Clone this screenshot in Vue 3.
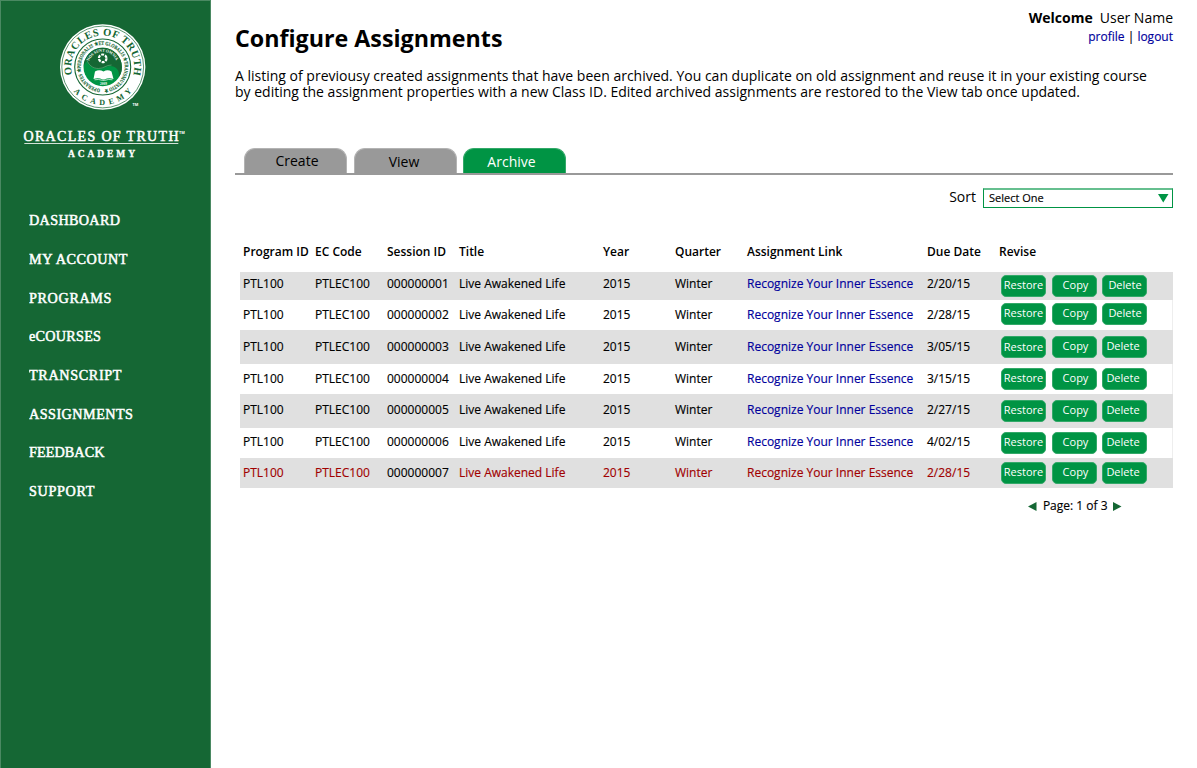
<script setup>
const nav = [
  { label: 'DASHBOARD', w: 91 },
  { label: 'MY ACCOUNT', w: 98.5 },
  { label: 'PROGRAMS', w: 82.5 },
  { label: 'eCOURSES', w: 72 },
  { label: 'TRANSCRIPT', w: 92.5 },
  { label: 'ASSIGNMENTS', w: 104 },
  { label: 'FEEDBACK', w: 75.5 },
  { label: 'SUPPORT', w: 65.5 }
]
const heads = ['Program ID', 'EC Code', 'Session ID', 'Title', 'Year', 'Quarter', 'Assignment Link', 'Due Date', 'Revise']
const rows = [
  { n: 1, due: '2/20/15' },
  { n: 2, due: '2/28/15' },
  { n: 3, due: '3/05/15' },
  { n: 4, due: '3/15/15' },
  { n: 5, due: '2/27/15' },
  { n: 6, due: '4/02/15' },
  { n: 7, due: '2/28/15', late: true }
]
</script>

<template>
  <div class="page">
    <aside class="side">
      <svg class="logo" width="211" height="170" viewBox="0 0 211 170">
        <defs>
          <path id="arcTop" d="M71.2 67a31.500 31.500 0 0 1 63 0a31.500 31.500 0 0 1 -63 0" transform="rotate(-90 102.7 67)" />
          <path id="arcBottom" d="M64.7 67a38 38 0 0 0 76 0" />
          <path id="arcInner" d="M102.7 89a22 22 0 0 1 0 -44a22 22 0 0 1 0 44" />
          <path id="arcMotto" d="M89.200 61a14.500 14.500 0 0 1 28 6" />
        </defs>
        <circle cx="102.7" cy="67" r="42.700" fill="#fff" />
        <circle cx="102.7" cy="67" r="40.9" fill="none" stroke="#156734" stroke-width=".7" />
        <circle cx="102.7" cy="67" r="28" fill="#fff" stroke="#156734" stroke-width="1.1" />
        <circle cx="102.7" cy="67" r="19.2" fill="#009444" />
        <path d="M83.5 67a19.2 19.2 0 0 1 38.4 0c0 5-1.5 8-3 10c1-7-3-11-9-11c-5 0-6 3-11 3c-7 0-10-4-12-8c-2 2-3 4-3.4 6z" fill="#156734" />
        <path d="M86.5 59c2 6 6 9.500 12 9.500c6 0 7-3.500 13-3.500" fill="none" stroke="#69b585" stroke-width=".6" />
        <circle cx="102.700" cy="58.300" r="3.800" fill="none" stroke="#fff" stroke-width="2.200" stroke-dasharray="2.900 1.080" />
        <path d="M95 71.500q4.200-2.500 8.500 0q4.200-2.500 8 0l2 7.500q-5-1.500-9 .500h-2q-4-2-9-.5z" fill="#fff" />
        <path d="M94.500 79.800q4-1 8 .6h2q4-1.600 8-.6" fill="none" stroke="#fff" stroke-width=".7" />
        <text class="tiny" x="103.500" y="84.800" text-anchor="middle">2009</text>
        <text class="seal"><textPath href="#arcTop" startOffset="41.500" textLength="115">ORACLES OF TRUTH</textPath></text>
        <text class="seal lower"><textPath href="#arcBottom" startOffset="26.500" textLength="66.500">ACADEMY</textPath></text>
        <text class="innertext"><textPath href="#arcInner" startOffset="2.500" textLength="133" lengthAdjust="spacingAndGlyphs">OPERANTES ★ PERSONALIS ★ ET GLOBALIS ★ TRANSMUTATIO ★</textPath></text>
        <text class="motto"><textPath href="#arcMotto" textLength="34" lengthAdjust="spacingAndGlyphs">NOS SUNT OMNIA</textPath></text>
        <text class="tm" x="132.500" y="105.500">TM</text>
        <text class="brand" x="23.500" y="141" textLength="155">ORACLES OF TRUTH</text>
        <text class="tm" x="179" y="133.500">TM</text>
        <rect x="24.300" y="143" width="154" height="1" fill="#d3e2d8" />
        <text class="brand2" x="68" y="156.500" textLength="67">ACADEMY</text>
      </svg>
      <nav>
        <a v-for="i in nav" :key="i.label">
          <svg width="160" height="20"><text class="navtext" x="0" y="15" :textLength="i.w">{{ i.label }}</text></svg>
        </a>
      </nav>
    </aside>

    <main>
      <header>
        <h1>Configure Assignments</h1>
        <div class="user">
          <div class="welcome"><b>Welcome</b><span>User Name</span></div>
          <div class="links"><a>profile</a> | <a>logout</a></div>
        </div>
      </header>
      <p class="intro">A listing of previousy created assignments that have been archived. You can duplicate on old assignment and reuse it in your existing course<br>by editing the assignment properties with a new Class ID. Edited archived assignments are restored to the View tab once updated.</p>
      <div class="tabs">
        <div class="tab create"><span>Create</span></div>
        <div class="tab view"><span>View</span></div>
        <div class="tab active"><span>Archive</span></div>
      </div>
      <div class="sort">
        <span>Sort</span>
        <div class="select"><span>Select One</span><svg width="11" height="9"><path d="M0 0h10.500L5.250 8.500z" fill="#009444" /></svg></div>
      </div>
      <div class="row head"><span v-for="h in heads" :key="h">{{ h }}</span></div>
      <div class="body">
        <div v-for="r in rows" :key="r.n" class="row" :class="['r' + r.n, { late: r.late }]">
          <span>PTL100</span>
          <span>PTLEC100</span>
          <span class="sid">00000000{{ r.n }}</span>
          <span>Live Awakened Life</span>
          <span>2015</span>
          <span>Winter</span>
          <span class="link">Recognize Your Inner Essence</span>
          <span>{{ r.due }}</span>
          <div class="btns">
            <button class="restore">Restore</button>
            <button class="copy">Copy</button>
            <button class="delete">Delete</button>
          </div>
        </div>
      </div>
      <div class="pager">
        <svg width="9" height="9"><path d="M8.500 0v9L0 4.500z" fill="#156734" /></svg>
        <span>Page: 1 of 3</span>
        <svg width="9" height="9"><path d="M0 0v9l8.500-4.500z" fill="#156734" /></svg>
      </div>
    </main>
  </div>
</template>

<style>
body { margin: 0; background: #fff; overflow: hidden; }
</style>

<style scoped>
* { box-sizing: border-box; }
.page { display: flex; width: 1197px; height: 768px; font-family: "Open Sans", sans-serif; color: #000; background: #fff; overflow: hidden; }
.side { width: 211px; background: #156734; border: 1px solid #4a8962; border-bottom: 0; flex: none; }
.logo { display: block; margin: -1px 0 0 -1px; }
.logo text { font-family: "Liberation Serif", serif; font-weight: bold; fill: #fff; }
.logo .seal { font-size: 10.5px; fill: #156734; }
.logo .lower { font-size: 8px; }
.logo .innertext { font-size: 5.2px; fill: #156734; stroke: #156734; stroke-width: .15px; }
.logo .motto { font-size: 4.2px; }
.logo .tiny { font-size: 3.4px; }
.logo .tm { font-size: 3.8px; font-family: "Open Sans", sans-serif; }
.logo .brand { font-size: 14px; font-weight: normal; stroke: #fff; stroke-width: .5px; }
.logo .brand2 { font-size: 9.5px; stroke: #fff; stroke-width: .3px; }
nav { display: flex; flex-direction: column; gap: 18.7px; padding: 40.3px 0 0 28.200px; }
nav a, nav svg { display: block; height: 20px; }
.navtext { font: 14.200px "Liberation Serif", serif; fill: #fff; stroke: #fff; stroke-width: .5px; }
main { flex: 1; padding: 0 24px 0 24px; min-width: 0; }
header { display: flex; justify-content: space-between; height: 67px; }
h1 { margin: 22px 0 0; font-size: 23.25px; line-height: 33px; font-weight: 700; white-space: nowrap; }
.user { text-align: right; padding-top: 8px; }
.welcome { font-size: 14px; line-height: 20px; }
.welcome b { margin-right: 7px; }
.links { font-size: 12px; line-height: 18px; -webkit-text-stroke: .15px; }
.links a { color: #00009c; }
.intro { margin: 1px 0 0; font-size: 14px; line-height: 16px; white-space: nowrap; height: 80px; }
.tabs { display: flex; height: 27px; border-bottom: 2px solid #999; padding-left: 9px; }
.tab { width: 103px; height: 25px; background: #999; border: 1px solid #b3b3b3; border-bottom: 0; border-radius: 11px 11px 0 0; font-size: 14px; line-height: 24px; text-align: center; }
.view { margin-left: 7px; line-height: 26px; padding-right: 3px; }
.create { padding-left: 3px; }
.active { margin-left: 6px; background: #009444; border-color: #33a969; color: #fff; line-height: 26px; padding-right: 6px; }
.sort { display: flex; justify-content: flex-end; margin-top: 13px; height: 20px; }
.sort > span { font-size: 14px; line-height: 18px; margin-right: 7px; }
.select { width: 190px; height: 20px; border: 1px solid #009444; border-top: 2px solid #66bf8f; display: flex; justify-content: space-between; align-items: center; font-size: 11px; padding: 0 4px 1px 5px; -webkit-text-stroke: .15px; }
.select span { line-height: 15px; margin-bottom: 2px; }
.select svg { margin-right: -1px; }
.row { display: grid; grid-template-columns: 72px 72px 72px 144px 72px 72px 180px 72px 1fr; padding-left: 3px; margin-left: 5px; font-size: 12px; line-height: 17px; white-space: nowrap; -webkit-text-stroke: .15px; }
.head { font-weight: 600; margin-top: 35px; height: 29px; -webkit-text-stroke: 0; }
.body { border-right: 1px solid #eee; margin-left: 5px; }
.body .row { margin-left: 0; margin-right: -1px; }
.row.r1 { height: 28px; padding-top: 3px; }
.row.r2 { height: 30px; padding-top: 6px; }
.row.r3 { height: 34px; padding-top: 8px; }
.row.r4 { height: 30px; padding-top: 6px; }
.row.r5 { height: 34px; padding-top: 7px; }
.row.r6 { height: 30px; padding-top: 5px; }
.row.r7 { height: 30px; padding-top: 6px; }
.row.r1, .row.r3, .row.r5, .row.r7 { background: #e0e0e0; }
.link { color: #00009c; }
.late, .late .link { color: #a10000; }
.late .sid { color: #000; }
.btns { display: flex; gap: 6px; padding-left: 2px; height: 22px; }
.r2 .btns { margin-top: -3px; }
.r3 .btns, .r4 .btns { margin-top: -2px; }
.r5 .btns, .r6 .btns { margin-top: -1px; }
.r7 .btns { margin-top: -2px; }
button { width: 45px; height: 22px; border: 1px solid #33a969; border-radius: 5px; background: #009444; color: #fff; font: 11px/18px "Open Sans", sans-serif; padding: 0 0 2px; text-align: center; -webkit-text-stroke: 0; }
.r3 .restore { padding-bottom: 0; }
.copy { padding-left: 2px; }
.delete { margin-left: -1.5px; }
.delete { padding-right: 2px; }
.r1 .delete, .r2 .delete { padding-left: 2px; padding-right: 0; }
.pager { display: flex; align-items: center; justify-content: flex-end; gap: 5.5px; margin: 9px 51px 0 0; font-size: 12px; line-height: 18px; -webkit-text-stroke: .15px; }
</style>
